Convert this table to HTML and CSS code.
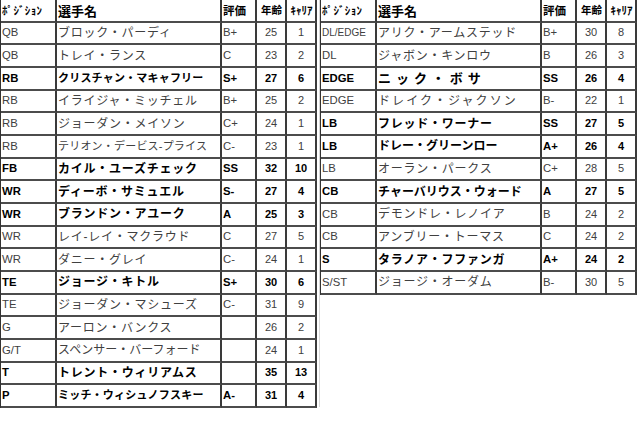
FILE: index.html
```html
<!DOCTYPE html>
<html lang="ja">
<head>
<meta charset="utf-8">
<title>ロースター</title>
<link rel="stylesheet" href="styles.css">
</head>
<body>
<div class="sheets">
  <table class="roster">
    <colgroup><col class="c-pos"><col class="c-name"><col class="c-grade"><col class="c-age"><col class="c-exp"></colgroup>
    <thead>
      <tr><th class="h-pos">ﾎﾟｼﾞｼｮﾝ</th><th class="h-name">選手名</th><th class="h-grade">評価</th><th class="h-age">年齢</th><th class="h-exp">ｷｬﾘｱ</th></tr>
    </thead>
    <tbody>
      <tr><td>QB</td><td class="name">ブロック・パーディ</td><td>B+</td><td class="num">25</td><td class="num">1</td></tr>
      <tr><td>QB</td><td class="name">トレイ・ランス</td><td>C</td><td class="num">23</td><td class="num">2</td></tr>
      <tr class="star"><td>RB</td><td class="name fit">クリスチャン・マキャフリー</td><td>S+</td><td class="num">27</td><td class="num">6</td></tr>
      <tr><td>RB</td><td class="name">イライジャ・ミッチェル</td><td>B+</td><td class="num">25</td><td class="num">2</td></tr>
      <tr><td>RB</td><td class="name">ジョーダン・メイソン</td><td>C+</td><td class="num">24</td><td class="num">1</td></tr>
      <tr><td>RB</td><td class="name fit">テリオン・デービス-プライス</td><td>C-</td><td class="num">23</td><td class="num">1</td></tr>
      <tr class="star"><td>FB</td><td class="name">カイル・ユーズチェック</td><td>SS</td><td class="num">32</td><td class="num">10</td></tr>
      <tr class="star"><td>WR</td><td class="name">ディーボ・サミュエル</td><td>S-</td><td class="num">27</td><td class="num">4</td></tr>
      <tr class="star"><td>WR</td><td class="name">ブランドン・アユーク</td><td>A</td><td class="num">25</td><td class="num">3</td></tr>
      <tr><td>WR</td><td class="name">レイ-レイ・マクラウド</td><td>C</td><td class="num">27</td><td class="num">5</td></tr>
      <tr><td>WR</td><td class="name">ダニー・グレイ</td><td>C-</td><td class="num">24</td><td class="num">1</td></tr>
      <tr class="star"><td>TE</td><td class="name">ジョージ・キトル</td><td>S+</td><td class="num">30</td><td class="num">6</td></tr>
      <tr><td>TE</td><td class="name">ジョーダン・マシューズ</td><td>C-</td><td class="num">31</td><td class="num">9</td></tr>
      <tr><td>G</td><td class="name">アーロン・バンクス</td><td></td><td class="num">26</td><td class="num">2</td></tr>
      <tr><td>G/T</td><td class="name tight">スペンサー・バーフォード</td><td></td><td class="num">24</td><td class="num">1</td></tr>
      <tr class="star"><td>T</td><td class="name">トレント・ウィリアムス</td><td></td><td class="num">35</td><td class="num">13</td></tr>
      <tr class="star"><td>P</td><td class="name fit">ミッチ・ウィシュノフスキー</td><td>A-</td><td class="num">31</td><td class="num">4</td></tr>
    </tbody>
  </table>

  <div class="panel">
    <table class="roster">
      <colgroup><col class="c-pos"><col class="c-name"><col class="c-grade"><col class="c-age"><col class="c-exp"></colgroup>
      <thead>
        <tr><th class="h-pos">ﾎﾟｼﾞｼｮﾝ</th><th class="h-name">選手名</th><th class="h-grade">評価</th><th class="h-age">年齢</th><th class="h-exp">ｷｬﾘｱ</th></tr>
      </thead>
      <tbody>
        <tr><td class="pos-fit">DL/EDGE</td><td class="name">アリク・アームステッド</td><td>B+</td><td class="num">30</td><td class="num">8</td></tr>
        <tr><td>DL</td><td class="name">ジャボン・キンロウ</td><td>B</td><td class="num">26</td><td class="num">3</td></tr>
        <tr class="star"><td>EDGE</td><td class="name spread">ニック・ボサ</td><td>SS</td><td class="num">26</td><td class="num">4</td></tr>
        <tr><td>EDGE</td><td class="name loose">ドレイク・ジャクソン</td><td>B-</td><td class="num">22</td><td class="num">1</td></tr>
        <tr class="star"><td>LB</td><td class="name">フレッド・ワーナー</td><td>SS</td><td class="num">27</td><td class="num">5</td></tr>
        <tr class="star"><td>LB</td><td class="name tight">ドレー・グリーンロー</td><td>A+</td><td class="num">26</td><td class="num">4</td></tr>
        <tr><td>LB</td><td class="name">オーラン・パークス</td><td>C+</td><td class="num">28</td><td class="num">5</td></tr>
        <tr class="star"><td>CB</td><td class="name tight">チャーバリウス・ウォード</td><td>A</td><td class="num">27</td><td class="num">5</td></tr>
        <tr><td>CB</td><td class="name">デモンドレ・レノイア</td><td>B</td><td class="num">24</td><td class="num">2</td></tr>
        <tr><td>CB</td><td class="name">アンブリー・トーマス</td><td>C</td><td class="num">24</td><td class="num">2</td></tr>
        <tr class="star"><td>S</td><td class="name">タラノア・フファンガ</td><td>A+</td><td class="num">24</td><td class="num">2</td></tr>
        <tr><td>S/ST</td><td class="name">ジョージ・オーダム</td><td>B-</td><td class="num">30</td><td class="num">5</td></tr>
      </tbody>
    </table>
  </div>
</div>
</body>
</html>
```

FILE: styles.css
```css
* {
  box-sizing: border-box;
}

html,
body {
  margin: 0;
  background: #ffffff;
}

body {
  font-family: "Liberation Sans", "Noto Sans CJK JP", sans-serif;
  font-size: 11.3px;
  color: #404040;
}

.sheets {
  display: flex;
  align-items: flex-start;
  gap: 2px;
  width: 640px;
  height: 423px;
}

.panel {
  flex: 1;
  height: 407px;
  border-left: 1px solid #d8d8d8;
}

.roster {
  border-collapse: separate;
  border-spacing: 0;
  table-layout: fixed;
  width: 317px;
  border-left: 1px solid #333333;
}

.c-pos { width: 56px; }
.c-name { width: 165px; }
.c-grade { width: 35px; }
.c-age { width: 30px; }
.c-exp { width: 30px; }

.roster th,
.roster td {
  height: 22.67px;
  padding: 0 0 0 1px;
  border-right: 2px solid #3a3a3a;
  border-bottom: 2px solid #4c4c4c;
  white-space: nowrap;
  overflow: hidden;
  vertical-align: middle;
  text-align: left;
  font-weight: 400;
  line-height: 1;
}

.roster th {
  color: #000000;
  font-weight: 700;
  font-family: "Noto Sans CJK JP", "Liberation Sans", sans-serif;
}

.h-pos {
  font-size: 11px;
  letter-spacing: 0.4px;
}

.h-name {
  font-size: 13px;
}

.h-grade {
  font-size: 11.5px;
}

.roster .h-age {
  font-size: 10.5px;
  text-align: center;
}

.roster .h-exp {
  font-size: 11px;
  text-align: center;
}

.roster td.num {
  text-align: center;
  padding: 0;
  font-size: 11px;
}

.roster td.name {
  font-size: 12px;
  letter-spacing: 0.75px;
}

.roster td.fit {
  font-size: 11px;
  letter-spacing: 0.2px;
}

.roster td.tight {
  font-size: 12px;
  letter-spacing: 0;
}

.roster td.loose {
  letter-spacing: 2.1px;
}

.roster td.spread {
  font-size: 13px;
  letter-spacing: 5px;
}

.roster td.pos-fit {
  font-size: 10px;
}

.star td {
  color: #000000;
  font-weight: 700;
}
```
